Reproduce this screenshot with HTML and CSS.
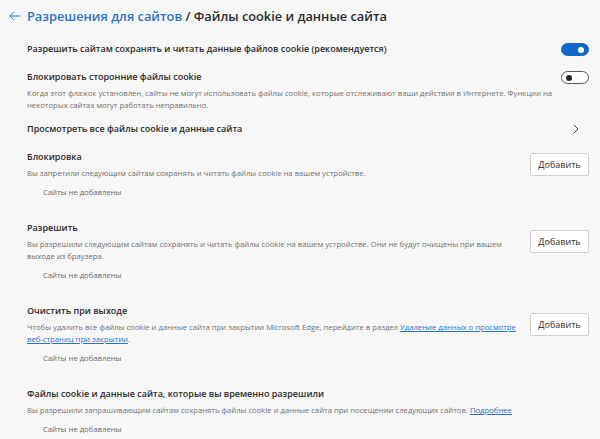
FILE: index.html
```html
<!DOCTYPE html>
<html lang="ru">
<head>
    <meta charset="UTF-8">
    <title>Файлы cookie и данные сайта</title>
    <link rel="stylesheet" href="styles.css">
</head>
<body>
    <header class="top">
        <svg class="back" width="12" height="10" viewBox="0 0 12 10">
            <path d="M11.5 5H1M5 0.8L0.9 5L5 9.2" fill="none" stroke="#2a73c6" stroke-width="1"/>
        </svg>
        <h1><span class="crumb">Разрешения для сайтов</span> / Файлы cookie и данные сайта</h1>
    </header>

    <div class="content">
        <div class="row first">
            <div class="label">Разрешить сайтам сохранять и читать данные файлов cookie (рекомендуется)</div>
            <div class="toggle on"><div class="knob"></div></div>
        </div>

        <div class="row block">
            <div class="label">Блокировать сторонние файлы cookie</div>
            <div class="toggle"><div class="knob"></div></div>
        </div>
        <p class="desc wide">Когда этот флажок установлен, сайты не могут использовать файлы cookie, которые отслеживают ваши действия в Интернете. Функции на некоторых сайтах могут работать неправильно.</p>

        <div class="row link-row">
            <div class="label">Просмотреть все файлы cookie и данные сайта</div>
            <svg class="chevron" width="6" height="10" viewBox="0 0 6 10">
                <path d="M0.8 0.8L5 5L0.8 9.2" fill="none" stroke="#444" stroke-width="1"/>
            </svg>
        </div>

        <section class="group">
            <div class="group-head">
                <div class="group-text">
                    <div class="label">Блокировка</div>
                    <p class="desc">Вы запретили следующим сайтам сохранять и читать файлы cookie на вашем устройстве.</p>
                </div>
                <button class="add">Добавить</button>
            </div>
            <div class="empty">Сайты не добавлены</div>
        </section>

        <section class="group">
            <div class="group-head">
                <div class="group-text">
                    <div class="label">Разрешить</div>
                    <p class="desc">Вы разрешили следующим сайтам сохранять и читать файлы cookie на вашем устройстве. Они не будут очищены при вашем выходе из браузера.</p>
                </div>
                <button class="add">Добавить</button>
            </div>
            <div class="empty">Сайты не добавлены</div>
        </section>

        <section class="group">
            <div class="group-head">
                <div class="group-text">
                    <div class="label">Очистить при выходе</div>
                    <p class="desc">Чтобы удалить все файлы cookie и данные сайта при закрытии Microsoft Edge, перейдите в раздел <a href="#">Удаление данных о просмотре веб-страниц при закрытии</a>.</p>
                </div>
                <button class="add">Добавить</button>
            </div>
            <div class="empty">Сайты не добавлены</div>
        </section>

        <section class="group">
            <div class="group-head">
                <div class="group-text">
                    <div class="label">Файлы cookie и данные сайта, которые вы временно разрешили</div>
                    <p class="desc">Вы разрешили запрашивающим сайтам сохранять файлы cookie и данные сайта при посещении следующих сайтов. <a href="#">Подробнее</a></p>
                </div>
            </div>
            <div class="empty">Сайты не добавлены</div>
        </section>
    </div>
</body>
</html>
```

FILE: styles.css
```css
body {
    margin: 0;
    background-color: #f7f7f7;
    font-family: "Open Sans", "Noto Sans", sans-serif;
    color: #2b2b2b;
    overflow: hidden;
}
.top {
    display: flex;
    align-items: center;
    height: 32px;
    padding-left: 9px;
}
.back {
    width: 12px;
    margin-right: 6px;
}
h1 {
    margin: 0;
    font-size: 12.8px;
    font-weight: 600;
    color: #2b2b2b;
}
.crumb {
    color: #2a73c6;
}
.content {
    padding: 0 11px 0 27px;
}
.row {
    display: flex;
    align-items: center;
    justify-content: space-between;
    height: 16px;
}
.row.first {
    margin-top: 9px;
}
.row.block {
    margin-top: 12px;
}
.row.link-row {
    margin-top: 10px;
}
.label {
    font-size: 9px;
    font-weight: 600;
    line-height: 16px;
}
.desc {
    margin: 2px 0 0 0;
    font-size: 7.7px;
    line-height: 12px;
    color: #717171;
}
.desc.wide {
    padding-right: 36px;
}
.desc a {
    color: #2a73c6;
}
.toggle {
    width: 26px;
    height: 11px;
    border-radius: 7px;
    border: 1px solid #555;
    background-color: #fff;
    position: relative;
}
.toggle .knob {
    position: absolute;
    top: 3px;
    left: 4px;
    width: 6px;
    height: 6px;
    border-radius: 50%;
    background-color: #222;
}
.toggle.on {
    background-color: #0f68c8;
    border-color: #0f68c8;
}
.toggle.on .knob {
    left: auto;
    right: 4px;
    background-color: #fff;
}
.chevron {
    margin-right: 10px;
}
.group {
    margin-top: 12px;
}
.group + .group {
    margin-top: 22px;
}
.group-head {
    display: flex;
    align-items: center;
}
.group-text {
    flex: 1;
}
.add {
    width: 59px;
    height: 23px;
    margin-left: 8px;
    border: 1px solid #cfcfcf;
    border-radius: 2px;
    background-color: #fff;
    font-family: inherit;
    font-size: 9px;
    color: #2b2b2b;
    padding: 0;
}
.empty {
    margin-top: 7px;
    padding-left: 16px;
    font-size: 7.7px;
    line-height: 12px;
    color: #6a6a6a;
}
```
